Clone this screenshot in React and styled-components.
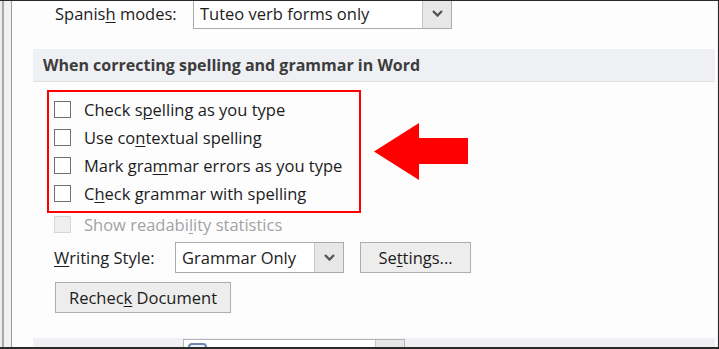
import React from "react";
import styled, { createGlobalStyle } from "styled-components";

const Global = createGlobalStyle`
  html, body { margin: 0; padding: 0; background: #ffffff; }
  body { font-family: "Open Sans", "Noto Sans", "Liberation Sans", sans-serif; }
`;

const Frame = styled.div`
  box-sizing: border-box;
  width: 719px;
  height: 349px;
  display: flex;
  border-top: 1px solid #2a2a2a;
  border-right: 1px solid #2a2a2a;
  border-bottom: 2px solid #2a2a2a;
  background: #fdfdfe;
  overflow: hidden;
`;

const Rail = styled.div`
  flex: 0 0 11px;
  border-right: 1px solid #9d9d9d;
  background: linear-gradient(to right, #ececec 0 2px, #a8a8a8 2px 4px, #f1f1f1 4px);
`;

const Main = styled.div`
  flex: 1;
  min-width: 0;
  display: flex;
  flex-direction: column;
  padding: 0 2px 0 21px;
  overflow: hidden;
  font-size: 16.5px;
  color: #1c1c1c;
  border-right: 1px solid #ececec;
  & > * { flex-shrink: 0; }
`;

const FieldRow = styled.div`
  display: flex;
  align-items: center;
  height: 31px;
  margin-left: ${(p) => p.$indent}px;
  margin-top: ${(p) => p.$top}px;
`;

const Label = styled.span`
  flex: 0 0 ${(p) => p.$width}px;
  white-space: nowrap;
`;

const Key = styled.span`
  text-decoration: underline;
  text-underline-offset: 2px;
  text-decoration-thickness: 1px;
`;

const Select = styled.div`
  box-sizing: border-box;
  flex: 0 0 ${(p) => p.$width}px;
  height: 31px;
  display: flex;
  border: 1px solid #ababab;
  background: #fff;
`;

const SelectValue = styled.div`
  flex: 1;
  display: flex;
  align-items: center;
  padding-left: 6px;
  white-space: nowrap;
  overflow: hidden;
`;

const SelectButton = styled.div`
  flex: 0 0 28px;
  display: flex;
  align-items: center;
  justify-content: center;
  background: #e7e7e7;
  border-left: 1px solid #c9c9c9;
`;

const Chevron = () => (
  <svg width="11" height="7" viewBox="0 0 11 7">
    <polyline points="1,1 5.5,5.5 10,1" fill="none" stroke="#555" strokeWidth="2.4" />
  </svg>
);

const SectionHeader = styled.div`
  box-sizing: border-box;
  height: 33px;
  margin-top: ${(p) => p.$top}px;
  display: flex;
  align-items: center;
  padding-left: 10px;
  background: #eff0f4;
  border-bottom: 1px solid #e1e2e7;
  font-size: 16px;
  font-weight: 700;
  color: #3c3c3c;
  white-space: nowrap;
`;

const HighlightRow = styled.div`
  display: flex;
  align-items: center;
  margin-top: 8px;
  margin-left: 14px;
`;

const HighlightBox = styled.div`
  box-sizing: border-box;
  flex: 0 0 314px;
  border: 2px solid #ff0000;
  padding: 3px 0 4px 5px;
`;

const CheckRow = styled.label`
  display: flex;
  align-items: center;
  height: ${(p) => p.$height || 28}px;
  gap: 13px;
  margin-left: ${(p) => p.$indent || 0}px;
  color: ${(p) => (p.$disabled ? "#a3a3a3" : "#1c1c1c")};
  white-space: nowrap;
`;

const Box = styled.span`
  box-sizing: border-box;
  flex: 0 0 17px;
  height: 17px;
  border: 1px solid ${(p) => (p.$disabled ? "#d6d6d6" : "#707070")};
  background: ${(p) => (p.$disabled ? "#efefef" : "#fff")};
`;

const Arrow = styled.svg`
  margin-left: 13px;
  flex: 0 0 auto;
`;

const Button = styled.div`
  box-sizing: border-box;
  flex: 0 0 auto;
  width: ${(p) => p.$width}px;
  height: 31px;
  margin-left: ${(p) => p.$left || 0}px;
  margin-top: ${(p) => p.$top || 0}px;
  display: flex;
  align-items: center;
  justify-content: center;
  border: 1px solid #adadad;
  background: #ededed;
  color: #1c1c1c;
  white-space: nowrap;
`;

const BottomBand = styled.div`
  flex: 1 0 auto;
  margin-top: 25px;
  background: #eff0f4;
  padding-left: 150px;
  padding-top: 1px;
`;

const BottomSelect = styled.div`
  box-sizing: border-box;
  width: 222px;
  height: 31px;
  display: flex;
  border: 1px solid #b5b5b5;
  background: #fff;
`;

const BottomSelectValue = styled.div`
  flex: 1;
  display: flex;
  align-items: flex-start;
  padding: 2px 0 0 3px;
  & > svg { display: block; }
`;

const BottomSelectButton = styled.div`
  flex: 0 0 28px;
  background: #e7e7e7;
  border-left: 1px solid #c9c9c9;
`;

const DocIcon = () => (
  <svg width="24" height="14" viewBox="0 0 24 14">
    <path d="M2 13 V5 Q2 2 5 2 H16 Q19 2 19 5 V13" fill="#eef2fa" stroke="#6f84b0" strokeWidth="2" />
  </svg>
);

const checks = [
  ["Check s", "p", "elling as you type"],
  ["Use co", "n", "textual spelling"],
  ["Mark gra", "m", "mar errors as you type"],
  ["C", "h", "eck grammar with spelling"],
];

export default function App() {
  return (
    <>
      <Global />
      <Frame>
        <Rail />
        <Main>
          <FieldRow $indent={22} $top={-3}>
            <Label $width={138}>
              Spanis<Key>h</Key> modes:
            </Label>
            <Select $width={259}>
              <SelectValue>Tuteo verb forms only</SelectValue>
              <SelectButton>
                <Chevron />
              </SelectButton>
            </Select>
          </FieldRow>

          <SectionHeader $top={20}>When correcting spelling and grammar in Word</SectionHeader>

          <HighlightRow>
            <HighlightBox>
              {checks.map(([a, k, b]) => (
                <CheckRow key={a + b}>
                  <Box />
                  <span>
                    {a}
                    <Key>{k}</Key>
                    {b}
                  </span>
                </CheckRow>
              ))}
            </HighlightBox>
            <Arrow width="94" height="57" viewBox="0 0 94 57">
              <polygon points="0,28.5 45,0 45,15 94,15 94,41 45,41 45,57" fill="#ff0000" />
            </Arrow>
          </HighlightRow>

          <CheckRow $indent={21} $height={22} $disabled>
            <Box $disabled />
            <span>
              Show readabi<Key>l</Key>ity statistics
            </span>
          </CheckRow>

          <FieldRow $indent={21} $top={7}>
            <Label $width={121}>
              <Key>W</Key>riting Style:
            </Label>
            <Select $width={169}>
              <SelectValue>Grammar Only</SelectValue>
              <SelectButton>
                <Chevron />
              </SelectButton>
            </Select>
            <Button $width={111} $left={16}>
              <span>
                Se<Key>t</Key>tings...
              </span>
            </Button>
          </FieldRow>

          <Button $width={176} $left={22} $top={9}>
            <span>
              Rechec<Key>k</Key> Document
            </span>
          </Button>

          <BottomBand>
            <BottomSelect>
              <BottomSelectValue>
                <DocIcon />
              </BottomSelectValue>
              <BottomSelectButton />
            </BottomSelect>
          </BottomBand>
        </Main>
      </Frame>
    </>
  );
}
